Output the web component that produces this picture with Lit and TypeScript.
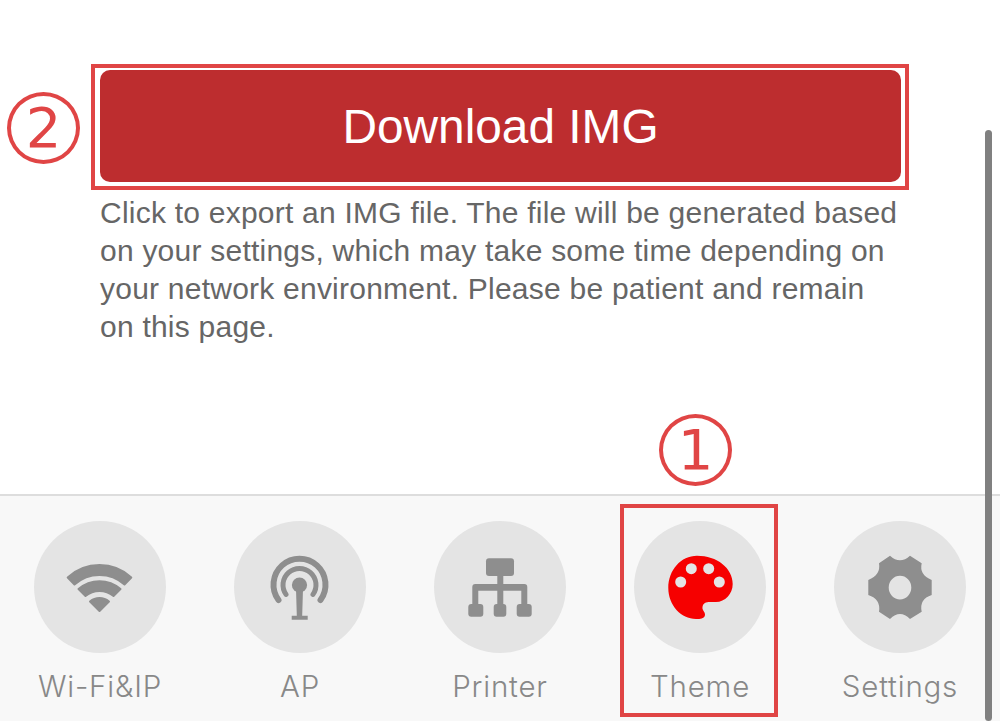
import { LitElement, html, css, svg } from 'lit';
import { customElement } from 'lit/decorators.js';

interface Tab {
  label: string;
  icon: unknown;
  active?: boolean;
}

// all icons are drawn in the 132x132 box of the round button
const tabs: Tab[] = [
  {
    label: 'Wi-Fi&IP',
    icon: svg`<g fill="#8e8e8e" stroke="#8e8e8e" stroke-width="2" stroke-linejoin="round">
      <path d="M33.7 56.5A47 47 0 0 1 97.3 56.5L90.5 63.5A37.5 37.5 0 0 0 40.5 63.5Z" />
      <path d="M44.5 68A32 32 0 0 1 86.5 68L79.5 75A22 22 0 0 0 51.5 75Z" />
      <path d="M56 80.5A15 15 0 0 1 75 80.5L65.5 90Z" />
    </g>`,
  },
  {
    label: 'AP',
    icon: svg`<g fill="none" stroke="#8e8e8e" stroke-linecap="round">
      <path stroke-width="6" d="M44.5 79A26 26 0 1 1 86.5 79" />
      <path stroke-width="5" d="M52 73.4A16.5 16.5 0 1 1 79 73.4" />
    </g>
    <circle cx="65.5" cy="64" r="7.6" fill="#8e8e8e" />
    <path fill="#8e8e8e" d="M62 68H69L68.2 94.7H73.7V98.8H57.7V94.7H62.8Z" />`,
  },
  {
    label: 'Printer',
    icon: svg`<g fill="#8e8e8e">
      <rect x="52" y="37.3" width="28" height="17.7" rx="3" />
      <rect x="63.3" y="54" width="6" height="30" />
      <path d="M41.3 63H90.3A3 3 0 0 1 93.3 66V84H87.3V69.7H44.3V84H38.3V66A3 3 0 0 1 41.3 63Z" />
      <rect x="34.3" y="83" width="15" height="12.7" rx="3" />
      <rect x="59.7" y="83" width="12.6" height="12.7" rx="3" />
      <rect x="82.7" y="83" width="15" height="12.7" rx="3" />
    </g>`,
  },
  {
    label: 'Theme',
    active: true,
    icon: svg`<path fill="#f60000" d="M63 34.7C47 34.7 34.3 49 34.3 67C34.3 84 47 98 62 98C66 98.5 71 97.5 71 93.5C71 90.5 68 89.5 68.5 86C69 82 72 81 76 81L82 81C91 81 98.7 73 98.7 63C98.7 47 83 34.7 63 34.7Z" />
    <g fill="#e4e4e4">
      <circle cx="57.3" cy="47.7" r="5.5" />
      <circle cx="74.7" cy="47.7" r="5.5" />
      <circle cx="46.7" cy="61" r="5.5" />
      <circle cx="85.3" cy="61" r="5.5" />
    </g>`,
  },
  {
    label: 'Settings',
    icon: svg`<path fill="#8e8e8e" fill-rule="evenodd" d="M56 34.7Q66 44 76 34.7L87.7 42.3Q85 54 97.7 59V74Q85 78 87.7 90.7L76 98Q66 88 56 98L45 90.7Q47 78 34.3 74V59Q47 54 45 42.3ZM66 54.8A11.3 11.8 0 1 0 66 78.4A11.3 11.8 0 1 0 66 54.8Z" />`,
  },
];

@customElement('app-root')
export class AppRoot extends LitElement {
  static styles = css`
    :host {
      display: flex;
      flex-direction: column;
      position: relative;
      height: 721px;
      overflow: hidden;
      background: #fff;
      font-family: 'Liberation Sans', Arial, sans-serif;
    }

    .content {
      flex: 1;
      padding: 70px 99px 0 100px;
    }

    .download {
      height: 112px;
      display: flex;
      align-items: center;
      justify-content: center;
      border-radius: 10px;
      background: #bd2d2f;
      color: #fff;
      font-size: 47.8px;
    }

    .hint {
      margin: 12px 0 0;
      font-size: 30px;
      line-height: 38px;
      letter-spacing: 0.23px;
      color: #666;
    }

    .tabbar {
      display: grid;
      grid-template-columns: repeat(5, 200px);
      height: 225px;
      border-top: 2px solid #ddd;
      background: #f8f8f8;
      font-family: Inter, sans-serif;
    }

    .tab {
      display: flex;
      flex-direction: column;
      align-items: center;
      position: relative;
      padding-top: 25px;
      color: #888;
      font-size: 29.5px;
      font-weight: 300;
      line-height: 34px;
      letter-spacing: 0.8px;
    }

    .tab svg {
      width: 132px;
      height: 132px;
      margin-bottom: 16px;
      border-radius: 50%;
      background: #e4e4e4;
    }

    .mark {
      position: absolute;
      box-sizing: border-box;
      border: 4px solid #e04545;
    }

    .mark-button {
      left: 91px;
      top: 64px;
      width: 818px;
      height: 126px;
    }

    .mark-tab {
      left: 20px;
      top: 8px;
      width: 158px;
      height: 213px;
    }

    .num {
      position: absolute;
      box-sizing: border-box;
      width: 73px;
      height: 72px;
      display: flex;
      align-items: center;
      justify-content: center;
      border: 4px solid #e04545;
      border-radius: 50%;
      color: #e04545;
      font-family: 'DejaVu Sans', sans-serif;
      font-size: 56px;
      line-height: 1;
    }

    .num-two {
      left: 7px;
      top: 92px;
    }

    .num-one {
      left: 659px;
      top: 414px;
    }

    .scrollbar {
      position: absolute;
      left: 985px;
      top: 130px;
      bottom: 0;
      width: 7px;
      border-radius: 4px;
      background: #808080;
    }
  `;

  render() {
    return html`
      <div class="content">
        <div class="download">Download IMG</div>
        <p class="hint">
          Click to export an IMG file. The file will be generated based on your settings, which may
          take some time depending on your network environment. Please be patient and remain on
          this page.
        </p>
      </div>
      <div class="tabbar">
        ${tabs.map(
          (t) => html`
            <div class="tab">
              <svg viewBox="0 0 132 132">${t.icon}</svg>
              <span>${t.label}</span>
              ${t.active ? html`<div class="mark mark-tab"></div>` : ''}
            </div>
          `
        )}
      </div>
      <div class="mark mark-button"></div>
      <div class="num num-two">2</div>
      <div class="num num-one">1</div>
      <div class="scrollbar"></div>
    `;
  }
}
